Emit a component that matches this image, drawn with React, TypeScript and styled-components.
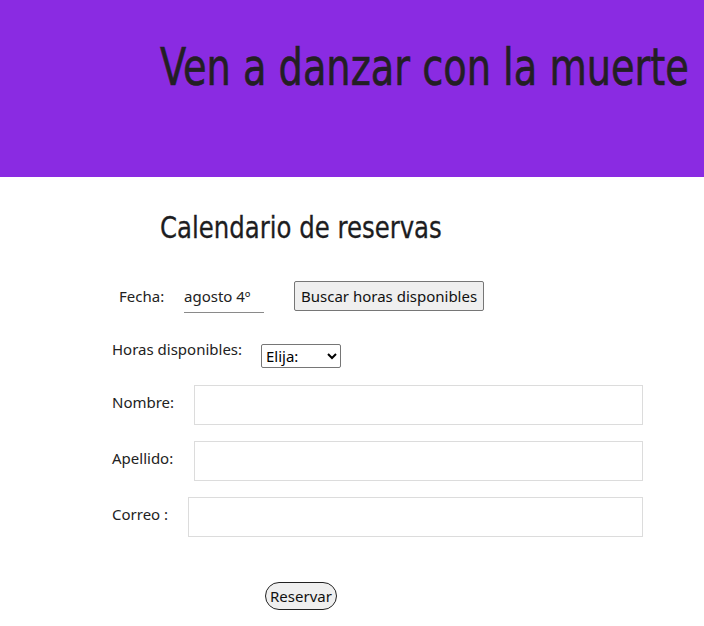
import React from "react";
import styled, { createGlobalStyle } from "styled-components";

const Global = createGlobalStyle`
  html, body { margin: 0; padding: 0; background: #fff; }
  body { font-family: "Noto Sans", "Open Sans", sans-serif; color: #222; }
`;

const Header = styled.header`
  background: #8a2be2;
  height: 177px;
  padding: 33px 0 0 160px;
  box-sizing: border-box;
  overflow: hidden;
`;

const Title = styled.h1`
  margin: 0;
  font-family: "DejaVu Sans Condensed", "DejaVu Sans", sans-serif;
  font-stretch: condensed;
  font-weight: normal;
  font-size: 51px;
  line-height: 70px;
  color: #231f24;
  white-space: nowrap;
  -webkit-text-stroke: 0.6px #231f24;
`;

const Narrow = styled.span<{ $sx: number }>`
  display: inline-block;
  transform: scaleX(${(p) => p.$sx});
  transform-origin: left center;
`;

const Main = styled.main`
  padding: 0 0 0 112px;
  overflow: hidden;
`;

const SubTitle = styled.h2`
  margin: 30px 0 0 48px;
  font-family: "DejaVu Sans Condensed", "DejaVu Sans", sans-serif;
  font-stretch: condensed;
  font-weight: normal;
  font-size: 31px;
  line-height: 40px;
  color: #1d1d1f;
  white-space: nowrap;
  -webkit-text-stroke: 0.3px #1d1d1f;
`;

const Row = styled.div<{ $top: number; $indent?: number }>`
  display: flex;
  align-items: flex-start;
  margin-top: ${(p) => p.$top}px;
  padding-left: ${(p) => p.$indent ?? 0}px;
`;

const Label = styled.label<{ $w: number; $pt?: number }>`
  width: ${(p) => p.$w}px;
  flex: none;
  font-size: 15px;
  line-height: 20px;
  padding-top: ${(p) => p.$pt ?? 0}px;
  color: #222;
`;

const DateInput = styled.input`
  width: 80px;
  box-sizing: border-box;
  border: none;
  border-bottom: 1px solid #8a8a8a;
  font-family: inherit;
  font-size: 15px;
  line-height: 20px;
  padding: 5px 0 6px 0;
  margin: 0;
  color: #222;
  background: transparent;
  outline: none;
`;

const Button = styled.button`
  margin-left: 30px;
  height: 30px;
  padding: 0 6px;
  font-family: inherit;
  font-size: 15px;
  background: #efefef;
  border: 1px solid #767676;
  border-radius: 2px;
  color: #111;
  box-sizing: border-box;
`;

const Select = styled.select`
  width: 80px;
  height: 24px;
  font-family: inherit;
  font-size: 15px;
  border: 1px solid #767676;
  border-radius: 2px;
  background: #fff;
  color: #000;
  margin-top: 5px;
`;

const TextInput = styled.input`
  box-sizing: border-box;
  height: 40px;
  border: 1px solid #dcdcdc;
  flex: none;
`;

const SubmitWrap = styled.div`
  margin-top: 45px;
  padding-left: 153px;
`;

const Submit = styled.button`
  height: 28px;
  padding: 0 4px;
  font-family: inherit;
  font-size: 15px;
  background: #efefef;
  border: 1px solid #222;
  border-radius: 14px;
  color: #111;
`;

export default function App() {
  return (
    <>
      <Global />
      <Header>
        <Title>
          <Narrow $sx={0.835}>Ven a danzar con la muerte</Narrow>
        </Title>
      </Header>
      <Main>
        <SubTitle>
          <Narrow $sx={0.875}>Calendario de reservas</Narrow>
        </SubTitle>
        <Row $top={34} $indent={7}>
          <Label $w={65} $pt={5}>Fecha:</Label>
          <DateInput defaultValue="agosto 4º" />
          <Button>Buscar horas disponibles</Button>
        </Row>
        <Row $top={26}>
          <Label $w={149} $pt={0}>Horas disponibles:</Label>
          <Select defaultValue="">
            <option value="">Elija:</option>
          </Select>
        </Row>
        <Row $top={17}>
          <Label $w={82} $pt={7}>Nombre:</Label>
          <TextInput style={{ width: 449 }} />
        </Row>
        <Row $top={16}>
          <Label $w={82} $pt={7}>Apellido:</Label>
          <TextInput style={{ width: 449 }} />
        </Row>
        <Row $top={16}>
          <Label $w={76} $pt={7}>Correo :</Label>
          <TextInput style={{ width: 455 }} />
        </Row>
        <SubmitWrap>
          <Submit>Reservar</Submit>
        </SubmitWrap>
      </Main>
    </>
  );
}
